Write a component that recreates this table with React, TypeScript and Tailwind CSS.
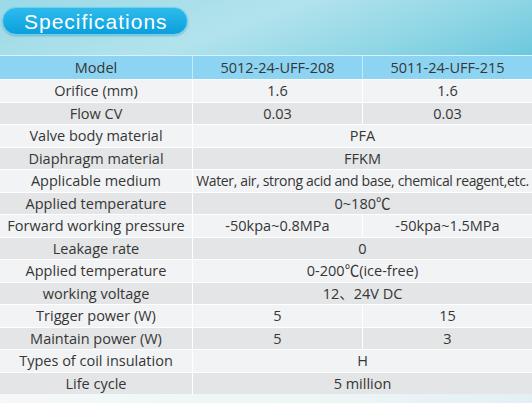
import React from "react";

type Row = { label: string; a: string; b?: string };

const rows: Row[] = [
  { label: "Orifice (mm)", a: "1.6", b: "1.6" },
  { label: "Flow CV", a: "0.03", b: "0.03" },
  { label: "Valve body material", a: "PFA" },
  { label: "Diaphragm material", a: "FFKM" },
  { label: "Applicable medium", a: "Water, air, strong acid and base, chemical reagent,etc." },
  { label: "Applied temperature", a: "0~180℃" },
  { label: "Forward working pressure", a: "-50kpa~0.8MPa", b: "-50kpa~1.5MPa" },
  { label: "Leakage rate", a: "0" },
  { label: "Applied temperature", a: "0-200℃(ice-free)" },
  { label: "working voltage", a: "12、24V DC" },
  { label: "Trigger power (W)", a: "5", b: "15" },
  { label: "Maintain power (W)", a: "5", b: "3" },
  { label: "Types of coil insulation", a: "H" },
  { label: "Life cycle", a: "5 million" },
];

export default function App() {
  return (
    <div
      className="w-[532px] h-[403px] overflow-hidden relative bg-[#eef4f6]"
      style={{ fontFamily: '"Open Sans", "Noto Sans CJK SC", sans-serif' }}
    >
      <div className="h-[55px] bg-[linear-gradient(160deg,#9bd9e6_0%,#b2e3ec_45%,#8fd6e5_75%,#6cc8dd_100%)] pt-[7px] pl-[2px]">
        <div className="w-[186px] h-[28px] rounded-full bg-[linear-gradient(180deg,#2ebbec_0%,#0aa0dc_100%)] border border-[#6fd0f2] flex items-center pl-[21px] shadow-[0_1px_2px_rgba(0,80,120,0.3)]">
          <span
            className="text-white text-[21px] tracking-[1px] leading-none"
            style={{ fontFamily: '"Liberation Sans", Arial, sans-serif' }}
          >
            Specifications
          </span>
        </div>
      </div>

      <div className="border-t border-[#d8f1fa] text-[14.5px] text-[#363636]">
        <div className="grid grid-cols-[193px_170px_1fr] h-[23px] bg-[#8dd4f3]">
          <div className="flex items-center justify-center border-r border-[#c4e9f9]">Model</div>
          <div className="flex items-center justify-center border-r border-[#c4e9f9]">5012-24-UFF-208</div>
          <div className="flex items-center justify-center">5011-24-UFF-215</div>
        </div>
        {rows.map((r, i) => (
          <div
            key={i}
            className={`grid grid-cols-[193px_170px_1fr] h-[22.5px] border-t border-white ${
              i % 2 === 0 ? "bg-[#f2f3f4]" : "bg-[#e4e5e6]"
            }`}
          >
            <div className="flex items-center justify-center border-r border-white whitespace-nowrap">{r.label}</div>
            {r.b !== undefined ? (
              <>
                <div className="flex items-center justify-center border-r border-white">{r.a}</div>
                <div className="flex items-center justify-center">{r.b}</div>
              </>
            ) : (
              <div
                className={`col-span-2 flex items-center justify-center whitespace-nowrap ${
                  r.a.length > 40 ? "text-[14px] tracking-[-0.35px]" : ""
                }`}
              >
                {r.a}
              </div>
            )}
          </div>
        ))}
      </div>
      <div className="h-[10px] bg-[linear-gradient(90deg,#f4f8f9_0%,#eef5f7_60%,#e3f0f3_100%)]" />
    </div>
  );
}
